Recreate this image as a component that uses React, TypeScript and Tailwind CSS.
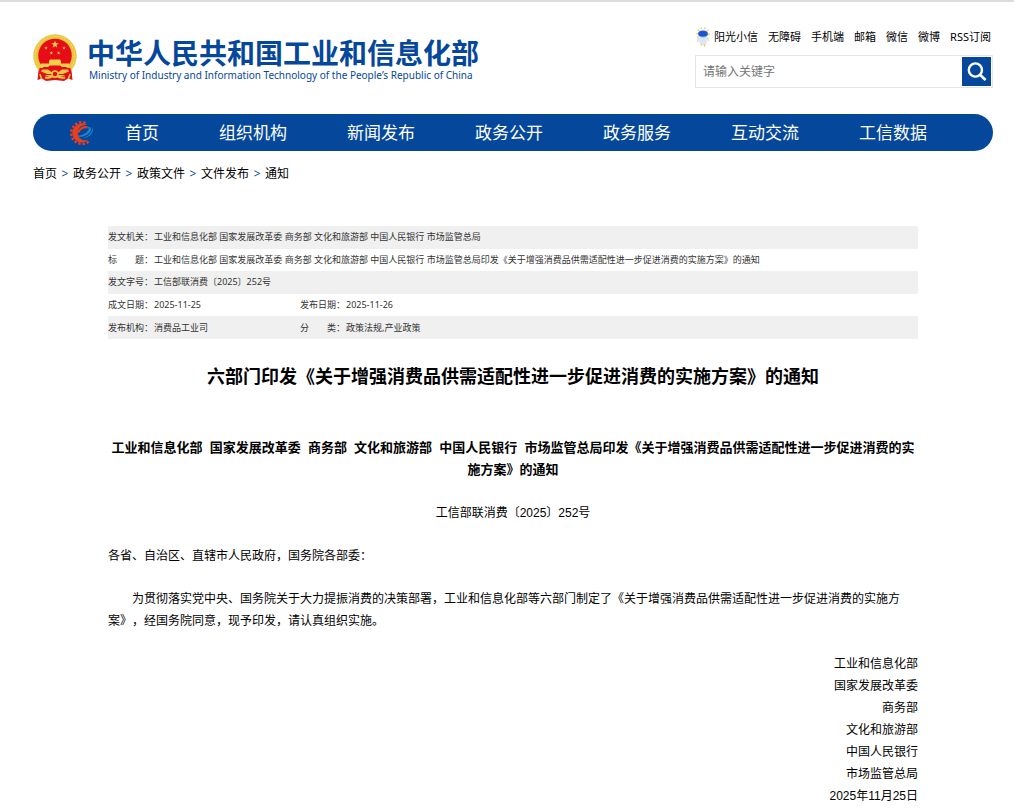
import React from "react";

const ministries = ["工业和信息化部", "国家发展改革委", "商务部", "文化和旅游部", "中国人民银行", "市场监管总局"];
const issuer = ministries.join(" ");
const planName = "《关于增强消费品供需适配性进一步促进消费的实施方案》";
const topLinks = ["无障碍", "手机端", "邮箱", "微信", "微博", "RSS订阅"];
const navItems = ["首页", "组织机构", "新闻发布", "政务公开", "政务服务", "互动交流", "工信数据"];
const crumbs = ["首页", "政务公开", "政策文件", "文件发布", "通知"];

const STAR = "M0,-1 L0.2245,-0.309 L0.951,-0.309 L0.363,0.118 L0.588,0.809 L0,0.382 L-0.588,0.809 L-0.363,0.118 L-0.951,-0.309 L-0.2245,-0.309 Z";

function Emblem() {
  return (
    <svg viewBox="0 0 44 48" className="h-12 w-11 shrink-0" aria-hidden="true">
      <path d="M6 33 L38 33 L39.5 46 L35 44.5 L31 47 L22 46 L13 47 L9 44.5 L4.5 46 Z" fill="#d9141c" />
      <circle cx="22" cy="22" r="21.7" fill="#eac540" />
      <circle cx="22" cy="22" r="19.8" fill="none" stroke="#f4da68" strokeWidth="1.2" strokeDasharray="1.6 1.4" />
      <circle cx="22" cy="21.5" r="16.8" fill="#e60d18" />
      <path d="M6.5 34 H37.5 L38.5 41 H5.5 Z" fill="#e60d18" />
      <path d={STAR} transform="translate(22 10.5) scale(3.9)" fill="#f8d64b" />
      <path d={STAR} transform="translate(13 14) scale(1.9)" fill="#f8d64b" />
      <path d={STAR} transform="translate(31 14) scale(1.9)" fill="#f8d64b" />
      <path d={STAR} transform="translate(18.3 19) scale(1.9)" fill="#f8d64b" />
      <path d={STAR} transform="translate(25.7 19) scale(1.9)" fill="#f8d64b" />
      <path d="M16 27 L17 25.5 H27 L28 27 V29.5 H36 L37 33 H29 L27 31.5 H17 L15 33 H7 L8 29.5 H16 Z" fill="#f4cf48" />
      <path d="M9 35.5 L15 35.5 L18.5 38 H25.5 L29 35.5 L35 35.5 L36 37.5 L30 40 H14 L8 37.5 Z" fill="#f0c640" />
      <path d="M12 43.5 Q17 44.5 20 41.5 M32 43.5 Q27 44.5 24 41.5" fill="none" stroke="#f0c640" strokeWidth="2" />
      <circle cx="22" cy="40" r="3" fill="#e60d18" stroke="#f0c640" strokeWidth="1.6" />
      <path d="M7 40 L8.5 45 M37 40 L35.5 45" stroke="#efc238" strokeWidth="1.6" />
    </svg>
  );
}

function GearLogo() {
  return (
    <svg viewBox="0 0 26 26" className="h-[26px] w-[26px] shrink-0" aria-hidden="true">
      <path d="M19.6 21.6 A10.8 10.8 0 1 1 18.2 3.6" fill="none" stroke="#e5401f" strokeWidth="2.4" strokeDasharray="2.4 1.8" />
      <path d="M19.4 20 A9.6 9.6 0 1 1 18.4 5 C12 4.4 8.6 8.4 8.8 13.2 C9.2 18.4 14 21.4 19.4 20 Z" fill="#e5401f" />
      <path d="M9 12.6 C10.6 8.2 15 6.2 18.6 7.4" fill="none" stroke="#e5401f" strokeWidth="2.2" />
      <path d="M9.2 15.4 C13.6 15.4 18.4 12.8 19.6 9.4 C20 8.2 19.4 7.2 18.4 6.8 C20.6 6.4 22.4 7.6 22 9.8 C21.2 14 15 17.4 9.6 16.8 Z" fill="#1a86d0" />
      <path d="M23 7.2 C26 10.8 21.6 17.4 13.4 18.4 C19.8 16.2 24 12 23 7.2 Z" fill="#1a86d0" />
    </svg>
  );
}

function Mascot() {
  return (
    <svg viewBox="0 0 14 20" className="h-5 w-3.5 shrink-0" aria-hidden="true">
      <circle cx="7" cy="7" r="6" fill="none" stroke="#f5cf4f" strokeWidth="1.6" strokeDasharray="1.4 2.2" />
      <rect x="3.2" y="9" width="7.6" height="8.5" rx="3" fill="#dce6f3" />
      <path d="M2.5 11 L1.5 15 M11.5 11 L12.5 14" stroke="#cfdced" strokeWidth="1.4" />
      <ellipse cx="7" cy="7" rx="5.4" ry="4.2" fill="#bdd3f4" />
      <ellipse cx="7" cy="6.8" rx="4.8" ry="3" fill="#1d56c9" />
      <path d="M5.5 17 V18.5 M8.5 17 V19.5" stroke="#e9c766" strokeWidth="1.4" />
    </svg>
  );
}

function SearchIcon() {
  return (
    <svg viewBox="0 0 29 29" className="h-[29px] w-[29px]" aria-hidden="true">
      <circle cx="13.4" cy="13" r="6.6" fill="none" stroke="#fff" strokeWidth="2.4" />
      <path d="M18 17.8 L23.6 23" stroke="#fff" strokeWidth="2.6" />
    </svg>
  );
}

function MetaRow({ label, value, shaded }: { label: React.ReactNode; value: string; shaded?: boolean }) {
  return (
    <tr className={shaded ? "bg-[#f0f0f0]" : ""}>
      <th scope="row" className="text-left font-normal">{label}</th>
      <td colSpan={3}>{value}</td>
    </tr>
  );
}

export default function App() {
  return (
    <div className="min-h-screen border-t-2 border-[#dcdcdc] bg-white pr-[21px] pl-[33px] font-['Noto_Sans','Noto_Sans_CJK_SC',sans-serif] text-black [text-spacing-trim:space-all]" lang="zh-CN">
      <div className="mx-auto max-w-[960px]">
        <header className="flex items-start justify-between pt-6">
          <a href="#" className="flex gap-2.5 pt-2 text-[#05489b]">
            <Emblem />
            <span className="flex flex-col pt-[3px] whitespace-nowrap">
              <span className="font-['Noto_Sans_CJK_SC',sans-serif] text-[28px] leading-[30px] font-bold">中华人民共和国工业和信息化部</span>
              <span className="pl-0.5 text-[10px] leading-4">Ministry of Industry and Information Technology of the People’s Republic of China</span>
            </span>
          </a>
          <div className="flex w-[298px] flex-col">
            <nav className="flex h-[29px] items-start justify-end gap-2.5 pr-0.5 text-[11px] leading-[22px] whitespace-nowrap">
              <a href="#" className="flex items-center gap-1"><Mascot />阳光小信</a>
              {topLinks.map((t) => <a key={t} href="#">{t}</a>)}
            </nav>
            <form className="flex border border-[#e5e5e5] p-px" onSubmit={(e) => e.preventDefault()}>
              <input aria-label="搜索" placeholder="请输入关键字" className="min-w-0 flex-1 px-1.5 text-[12px] outline-none placeholder:text-[#757575]" />
              <button type="submit" aria-label="搜索" className="bg-[#05489b]"><SearchIcon /></button>
            </form>
          </div>
        </header>

        <nav className="mt-[26px] flex h-[37px] items-center rounded-full bg-[#05489b] pl-9 text-white">
          <GearLogo />
          <ul className="flex gap-[60px] pl-[30px] text-[17px] leading-6 whitespace-nowrap">
            {navItems.map((t) => <li key={t}><a href="#">{t}</a></li>)}
          </ul>
        </nav>

        <nav className="flex gap-1 pt-[13px] text-[12px] leading-5" aria-label="面包屑">
          {crumbs.map((t, i) => (
            <React.Fragment key={t}>
              {i > 0 && <span className="w-2 text-center text-[#05489b]">&gt;</span>}
              <a href="#">{t}</a>
            </React.Fragment>
          ))}
        </nav>
      </div>

      <main className="mx-auto mt-[42px] max-w-[810px]">
        <table className="h-[113px] w-full table-fixed text-[9px] leading-4 text-[#333]">
          <colgroup>
            <col className="w-[46px]" />
            <col className="w-[146px]" />
            <col className="w-[46px]" />
            <col />
          </colgroup>
          <tbody>
            <MetaRow label="发文机关：" value={issuer} shaded />
            <MetaRow label="标　　题：" value={`${issuer}印发${planName}的通知`} />
            <MetaRow label="发文字号：" value="工信部联消费〔2025〕252号" shaded />
            <tr>
              <th scope="row" className="text-left font-normal">成文日期：</th>
              <td>2025-11-25</td>
              <th scope="row" className="text-left font-normal">发布日期：</th>
              <td>2025-11-26</td>
            </tr>
            <tr className="bg-[#f0f0f0]">
              <th scope="row" className="text-left font-normal">发布机构：</th>
              <td>消费品工业司</td>
              <th scope="row" className="text-left font-normal">分　　类：</th>
              <td>政策法规,产业政策</td>
            </tr>
          </tbody>
        </table>

        <h1 className="mt-6 text-center text-[18px] leading-[26px] font-bold">{`六部门印发${planName}的通知`}</h1>

        <article className="mt-12 flex flex-col gap-[21px] font-['Liberation_Sans','Noto_Sans_CJK_SC',sans-serif] text-[12px] leading-[22px]">
          <h2 className="text-center text-[13px] leading-[22px] font-bold">
            {`${ministries.join("\u00a0 ")}印发${planName}的通知`}
          </h2>
          <p className="text-center">工信部联消费〔2025〕252号</p>
          <p>各省、自治区、直辖市人民政府，国务院各部委：</p>
          <p className="indent-6">
            {`为贯彻落实党中央、国务院关于大力提振消费的决策部署，工业和信息化部等六部门制定了${planName}，经国务院同意，现予印发，请认真组织实施。`}
          </p>
          <div className="text-right">
            {ministries.map((m) => <p key={m}>{m}</p>)}
            <p>2025年11月25日</p>
          </div>
        </article>
      </main>
    </div>
  );
}
